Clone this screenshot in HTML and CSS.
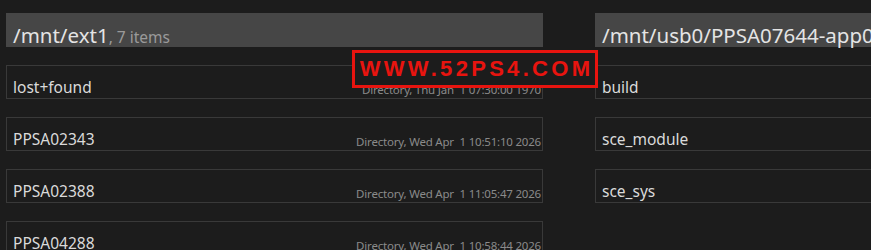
FILE: index.html
```html
<!DOCTYPE html>
<html>
<head>
    <title>File Browser</title>
    <link rel="stylesheet" href="styles.css">
</head>
<body>
    <div class="panes">
        <div class="pane">
            <div class="pane-header">
                <div class="path">/mnt/ext1<span class="count">, 7 items</span></div>
            </div>
            <div class="entry">
                <span class="name">lost+found</span>
                <span class="meta">Directory, Thu Jan  1 07:30:00 1970</span>
            </div>
            <div class="entry">
                <span class="name">PPSA02343</span>
                <span class="meta">Directory, Wed Apr  1 10:51:10 2026</span>
            </div>
            <div class="entry">
                <span class="name">PPSA02388</span>
                <span class="meta">Directory, Wed Apr  1 11:05:47 2026</span>
            </div>
            <div class="entry">
                <span class="name">PPSA04288</span>
                <span class="meta">Directory, Wed Apr  1 10:58:44 2026</span>
            </div>
        </div>

        <div class="pane">
            <div class="pane-header">
                <div class="path">/mnt/usb0/PPSA07644-app0</div>
            </div>
            <div class="entry">
                <span class="name">build</span>
            </div>
            <div class="entry">
                <span class="name">sce_module</span>
            </div>
            <div class="entry">
                <span class="name">sce_sys</span>
            </div>
        </div>
    </div>

    <div class="watermark">WWW.52PS4.COM</div>
</body>
</html>
```

FILE: styles.css
```css
body {
    margin: 0;
    background-color: #1c1c1c;
    font-family: "Noto Sans", sans-serif;
    overflow: hidden;
    height: 250px;
}

.panes {
    display: flex;
    gap: 52px;
    padding: 13px 0 0 6px;
}

.pane {
    flex-shrink: 0;
    width: 537px;
    display: flex;
    flex-direction: column;
    gap: 18px;
}

.pane-header {
    height: 34px;
    box-sizing: border-box;
    background-color: #464646;
    display: flex;
    align-items: flex-end;
    padding: 0 7px 2px 7px;
    white-space: nowrap;
}

.path {
    color: #e4e4e4;
    font-size: 20.5px;
    line-height: 1;
}

.count {
    color: #9a9a9a;
    font-size: 15.5px;
}

.entry {
    height: 34px;
    box-sizing: border-box;
    border: 1px solid #393939;
    display: flex;
    align-items: flex-end;
    justify-content: space-between;
    padding: 0 1px 3px 6px;
}

.name {
    color: #dadada;
    font-size: 15.5px;
    line-height: 1;
}

.meta {
    color: #8a8a8a;
    font-size: 11.5px;
    letter-spacing: -0.2px;
    line-height: 1;
    white-space: pre;
}

.watermark {
    position: absolute;
    left: 352px;
    top: 50px;
    width: 246px;
    height: 38px;
    box-sizing: border-box;
    border: 3px solid #e8140f;
    background-color: #1c1c1c;
    color: #e8140f;
    font-family: "Liberation Sans", Arial, sans-serif;
    font-weight: bold;
    font-size: 22px;
    letter-spacing: 3.3px;
    display: flex;
    align-items: center;
    justify-content: center;
    padding-left: 3px;
}
```
